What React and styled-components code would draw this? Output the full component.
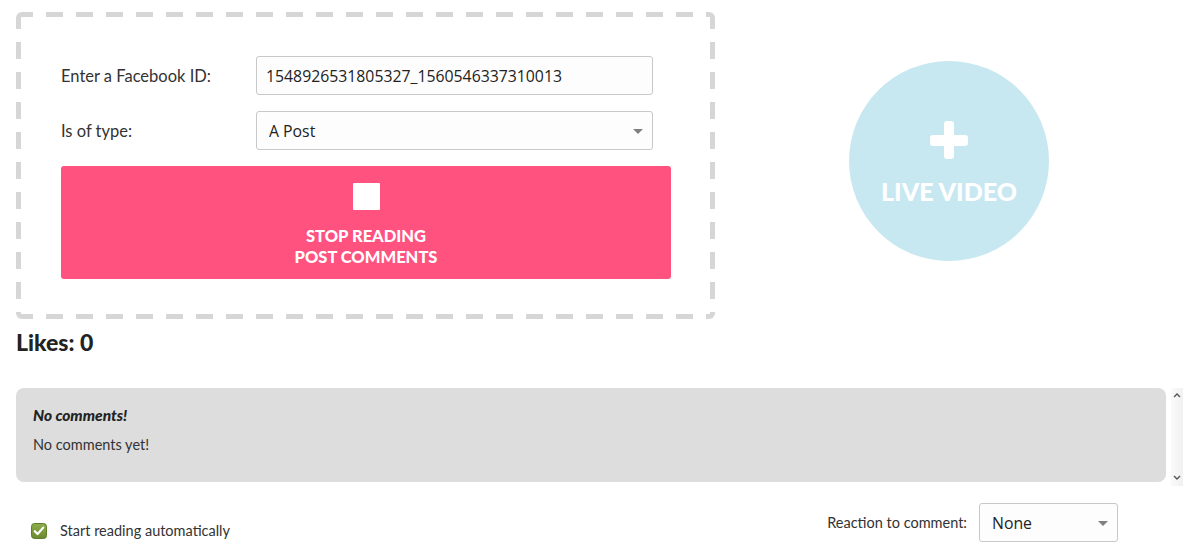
import React from "react";
import styled, { createGlobalStyle } from "styled-components";

const GlobalStyle = createGlobalStyle`
  html, body {
    margin: 0;
    padding: 0;
    background: #fff;
  }
  body {
    font-family: 'Lato', 'Open Sans', sans-serif;
    color: #333;
  }
`;

export default function App() {
  return (
    <Page>
      <GlobalStyle />
      <TopRow>
        <ReaderPanel>
          <FormRow>
            <Label>Enter a Facebook ID:</Label>
            <TextInput defaultValue="1548926531805327_1560546337310013" />
          </FormRow>
          <FormRow>
            <Label>Is of type:</Label>
            <SelectWrap $width="397px">
              <Select defaultValue="post">
                <option value="post">A Post</option>
                <option value="video">A Video</option>
              </Select>
            </SelectWrap>
          </FormRow>
          <StopButton>
            <StopSquare />
            <ButtonText>
              STOP READING
              <br />
              POST COMMENTS
            </ButtonText>
          </StopButton>
        </ReaderPanel>

        <RightArea>
          <LiveCircle>
            <svg width="38" height="38" viewBox="0 0 38 38">
              <rect x="14" y="0" width="10" height="38" rx="3" fill="#fff" />
              <rect x="0" y="14" width="38" height="11" rx="3" fill="#fff" />
            </svg>
            <LiveText>LIVE VIDEO</LiveText>
          </LiveCircle>
        </RightArea>
      </TopRow>

      <Likes>Likes: 0</Likes>

      <CommentsRow>
        <CommentsBox>
          <CommentTitle>No comments!</CommentTitle>
          <CommentBody>No comments yet!</CommentBody>
        </CommentsBox>
        <ScrollTrack>
          <svg width="8" height="5" viewBox="0 0 8 5">
            <path d="M1 4 L4 1 L7 4" stroke="#555" strokeWidth="1.4" fill="none" />
          </svg>
          <svg width="8" height="5" viewBox="0 0 8 5">
            <path d="M1 1 L4 4 L7 1" stroke="#555" strokeWidth="1.4" fill="none" />
          </svg>
        </ScrollTrack>
      </CommentsRow>

      <BottomRow>
        <CheckLabel>
          <svg width="16" height="16" viewBox="0 0 16 16">
            <defs>
              <linearGradient id="chk" x1="0" y1="0" x2="0" y2="1">
                <stop offset="0" stopColor="#8eae4c" />
                <stop offset="1" stopColor="#6a8a2e" />
              </linearGradient>
            </defs>
            <rect x="0.5" y="0.5" width="15" height="15" rx="3" fill="url(#chk)" stroke="#5f7d28" />
            <path d="M3.8 8.2 L6.6 11 L12.2 4.6" stroke="#fff" strokeWidth="2.2" fill="none" strokeLinecap="round" strokeLinejoin="round" />
          </svg>
          <SmallText>Start reading automatically</SmallText>
        </CheckLabel>
        <ReactionGroup>
          <SmallText>Reaction to comment:</SmallText>
          <SelectWrap $width="139px">
            <Select defaultValue="none">
              <option value="none">None</option>
              <option value="like">Like</option>
            </Select>
          </SelectWrap>
        </ReactionGroup>
      </BottomRow>
    </Page>
  );
}

const dash = "#d6d6d6";

const Page = styled.div`
  padding: 12px 10px 0 16px;
`;

const TopRow = styled.div`
  display: flex;
  align-items: flex-start;
`;

const ReaderPanel = styled.div`
  box-sizing: border-box;
  width: 699px;
  height: 307px;
  border-radius: 6px;
  background:
    repeating-linear-gradient(90deg, ${dash} 0 17px, transparent 17px 30px) top left / 100% 5px no-repeat,
    repeating-linear-gradient(90deg, ${dash} 0 17px, transparent 17px 30px) bottom left / 100% 5px no-repeat,
    repeating-linear-gradient(180deg, ${dash} 0 17px, transparent 17px 30px) top left / 5px 100% no-repeat,
    repeating-linear-gradient(180deg, ${dash} 0 17px, transparent 17px 30px) top right / 5px 100% no-repeat;
  padding: 44px 44px 0 45px;
  display: flex;
  flex-direction: column;
  gap: 16px;
`;

const FormRow = styled.div`
  display: flex;
  align-items: center;
`;

const Label = styled.label`
  width: 195px;
  font-family: 'Lato', sans-serif;
  font-size: 16.5px;
  color: #333;
`;

const TextInput = styled.input`
  box-sizing: border-box;
  width: 397px;
  height: 39px;
  border: 1px solid #c8c8c8;
  border-radius: 3px;
  background: #fdfdfd;
  padding: 0 9px;
  font-family: 'Open Sans', sans-serif;
  font-size: 15.8px;
  color: #222;
  outline: none;
`;

const SelectWrap = styled.div`
  position: relative;
  width: ${(p) => p.$width};

  &::after {
    content: "";
    position: absolute;
    right: 10px;
    top: 50%;
    margin-top: -2px;
    border-left: 5px solid transparent;
    border-right: 5px solid transparent;
    border-top: 5px solid #808080;
    pointer-events: none;
  }
`;

const Select = styled.select`
  appearance: none;
  box-sizing: border-box;
  width: 100%;
  height: 39px;
  border: 1px solid #c8c8c8;
  border-radius: 3px;
  background: #fdfdfd;
  padding: 0 12px;
  font-family: 'Open Sans', sans-serif;
  font-size: 15.8px;
  color: #222;
  outline: none;
`;

const StopButton = styled.button`
  width: 610px;
  height: 113px;
  border: none;
  border-radius: 3px;
  background: #ff527f;
  color: #fff;
  cursor: pointer;
  display: flex;
  flex-direction: column;
  align-items: center;
  padding: 17px 0 0;
`;

const StopSquare = styled.span`
  width: 27px;
  height: 27px;
  background: #fff;
  border-radius: 1px;
`;

const ButtonText = styled.span`
  margin-top: 16px;
  font-family: 'Lato', sans-serif;
  font-weight: 900;
  font-size: 16.5px;
  line-height: 21px;
`;

const RightArea = styled.div`
  flex: 1;
  display: flex;
  justify-content: center;
  padding-top: 49px;
`;

const LiveCircle = styled.div`
  width: 200px;
  height: 200px;
  border-radius: 50%;
  background: #c8e8f1;
  display: flex;
  flex-direction: column;
  align-items: center;
  padding-top: 60px;
  box-sizing: border-box;
`;

const LiveText = styled.span`
  margin-top: 17px;
  font-family: 'Lato', sans-serif;
  font-weight: 900;
  font-size: 25px;
  line-height: 30px;
  color: #fff;
`;

const Likes = styled.h3`
  margin: 10px 0 0;
  font-family: 'Lato', sans-serif;
  font-weight: 900;
  font-size: 23px;
  line-height: 26px;
  color: #222;
`;

const CommentsRow = styled.div`
  display: flex;
  margin-top: 33px;
  gap: 5px;
`;

const CommentsBox = styled.div`
  flex: 1;
  height: 94px;
  box-sizing: border-box;
  background: #dddddd;
  border-radius: 8px;
  padding: 18px 17px;
`;

const CommentTitle = styled.div`
  font-family: 'Lato', sans-serif;
  font-weight: 900;
  font-style: italic;
  font-size: 15.5px;
  color: #222;
`;

const CommentBody = styled.div`
  margin-top: 12px;
  font-family: 'Lato', sans-serif;
  font-size: 14.5px;
  color: #333;
`;

const ScrollTrack = styled.div`
  width: 12px;
  height: 98px;
  background: linear-gradient(90deg, #fafafa, #f1f1f1);
  display: flex;
  flex-direction: column;
  justify-content: space-between;
  align-items: center;
  padding: 5px 0 6px;
  box-sizing: border-box;
`;

const BottomRow = styled.div`
  display: flex;
  justify-content: space-between;
  align-items: center;
  margin-top: 17px;
  padding: 0 65px 0 15px;
`;

const CheckLabel = styled.label`
  display: flex;
  align-items: center;
  gap: 13px;
  margin-top: 16px;
`;

const SmallText = styled.span`
  font-family: 'Lato', sans-serif;
  font-size: 14.5px;
  color: #333;
`;

const ReactionGroup = styled.div`
  display: flex;
  align-items: center;
  gap: 12px;
`;
